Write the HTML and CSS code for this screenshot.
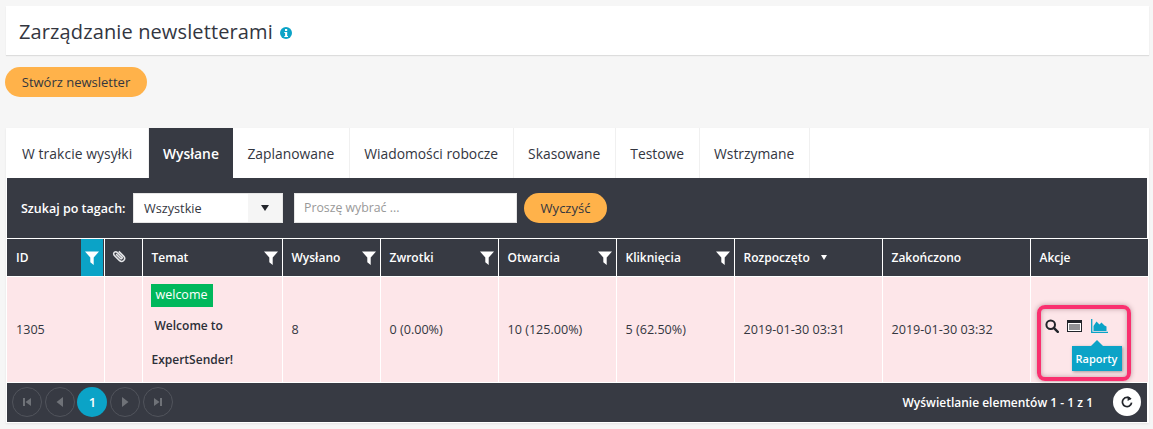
FILE: index.html
```html
<!DOCTYPE html>
<html lang="pl">
<head>
<meta charset="utf-8">
<title>Zarządzanie newsletterami</title>
<link rel="stylesheet" href="styles.css">
</head>
<body>
<svg class="defs" width="0" height="0" aria-hidden="true">
  <symbol id="funnel" viewBox="0 0 14 14"><path d="M0 0.5h14L8.7 6.6V14L5.3 11.3V6.6z" fill="currentColor"/></symbol>
</svg>
<header class="page-head">
  <h1>Zarządzanie newsletterami</h1>
  <svg class="info" viewBox="0 0 12 12" width="12" height="12"><circle cx="6" cy="6" r="6" fill="#0ba3c7"/><rect x="5" y="2" width="2.2" height="2" fill="#fff"/><path d="M4.3 5h2.9v3.9h.8V10H4.3V8.9h.8V6.1h-.8z" fill="#fff"/></svg>
</header>
<div class="actions"><button class="btn btn-create">Stwórz newsletter</button></div>
<main class="panel">
  <nav class="tabs">
    <a class="tab">W trakcie wysyłki</a>
    <a class="tab active">Wysłane</a>
    <a class="tab">Zaplanowane</a>
    <a class="tab">Wiadomości robocze</a>
    <a class="tab">Skasowane</a>
    <a class="tab">Testowe</a>
    <a class="tab">Wstrzymane</a>
  </nav>
  <div class="toolbar">
    <label class="tb-label">Szukaj po tagach:</label>
    <div class="select"><span class="select-val">Wszystkie</span><span class="select-arrow"><i></i></span></div>
    <div class="input">Proszę wybrać ...</div>
    <button class="btn btn-clear">Wyczyść</button>
  </div>
  <table class="grid">
    <colgroup>
      <col class="c-id"><col class="c-att"><col class="c-subj"><col class="c-sent"><col class="c-ret"><col class="c-open"><col class="c-click"><col class="c-start"><col class="c-end"><col class="c-act">
    </colgroup>
    <thead>
      <tr>
        <th><div class="th-in">ID<span class="flt flt-on"><svg width="14" height="14"><use href="#funnel"/></svg></span></div></th>
        <th><svg class="clip" viewBox="0 0 14 14" width="14" height="14"><path d="M11.6 6.8 6.9 11.6c-1.3 1.3-3.2 1.3-4.4.1s-1.2-3.1.1-4.4l5-5c.9-.9 2.2-.9 3 0s.8 2.1 0 2.9L5.9 9.9c-.4.4-1 .4-1.4 0s-.4-1 0-1.4l4.4-4.4" fill="none" stroke="#e4e5e8" stroke-width="1.5" transform="rotate(-90 7 7)"/></svg></th>
        <th><div class="th-in">Temat<span class="flt"><svg width="14" height="14"><use href="#funnel"/></svg></span></div></th>
        <th><div class="th-in">Wysłano<span class="flt"><svg width="14" height="14"><use href="#funnel"/></svg></span></div></th>
        <th><div class="th-in">Zwrotki<span class="flt"><svg width="14" height="14"><use href="#funnel"/></svg></span></div></th>
        <th><div class="th-in">Otwarcia<span class="flt"><svg width="14" height="14"><use href="#funnel"/></svg></span></div></th>
        <th><div class="th-in">Kliknięcia<span class="flt"><svg width="14" height="14"><use href="#funnel"/></svg></span></div></th>
        <th><div class="th-in">Rozpoczęto<span class="sort"></span></div></th>
        <th><div class="th-in">Zakończono</div></th>
        <th><div class="th-in">Akcje</div></th>
      </tr>
    </thead>
    <tbody>
      <tr>
        <td>1305</td>
        <td></td>
        <td class="subj">
          <span class="tag">welcome</span>
          <p class="subj-l1">Welcome to</p>
          <p class="subj-l2">ExpertSender!</p>
        </td>
        <td>8</td>
        <td>0 (0.00%)</td>
        <td>10 (125.00%)</td>
        <td>5 (62.50%)</td>
        <td>2019-01-30 03:31</td>
        <td>2019-01-30 03:32</td>
        <td class="acts">
          <div class="icons">
            <svg viewBox="0 0 14 14" width="14" height="14"><circle cx="5.7" cy="5.7" r="4.3" fill="none" stroke="#22252b" stroke-width="2"/><path d="M8.8 8.8l4 4" stroke="#22252b" stroke-width="2.4" stroke-linecap="round"/></svg>
            <svg viewBox="0 0 15 12" width="15" height="12"><rect x=".5" y=".5" width="14" height="11" fill="#fff" stroke="#22252b"/><rect width="15" height="3" fill="#22252b"/><path d="M2 5h11M2 7h11M2 9h11" stroke="#22252b"/></svg>
            <svg viewBox="0 0 17 14" width="17" height="14"><path d="M.7 0v13.3H17" fill="none" stroke="#0ba3c7" stroke-width="1.3"/><path d="M2.5 12V7l3-4.5 3 3 2-2 3 3 2 1V12z" fill="#0ba3c7"/></svg>
          </div>
          <div class="tip">Raporty</div>
          <div class="hl"></div>
        </td>
      </tr>
    </tbody>
  </table>
  <footer class="pager">
    <div class="pages">
      <span class="pg"><svg viewBox="0 0 10 10" width="10" height="10"><path d="M1 1h2v8H1zM9 1v8L3.5 5z"/></svg></span>
      <span class="pg"><svg viewBox="0 0 10 10" width="10" height="10"><path d="M8 0v10L1.5 5z"/></svg></span>
      <span class="pg pg-on">1</span>
      <span class="pg"><svg viewBox="0 0 10 10" width="10" height="10"><path d="M2 0v10L8.5 5z"/></svg></span>
      <span class="pg"><svg viewBox="0 0 10 10" width="10" height="10"><path d="M1 1v8L6.5 5zM7 1h2v8H7z"/></svg></span>
    </div>
    <div class="count">Wyświetlanie elementów 1 - 1 z 1</div>
    <span class="refresh"><svg viewBox="0 0 12 12" width="12" height="12"><path d="M9.7 3.2A4.6 4.6 0 1 0 10.6 6.6" fill="none" stroke="#22252b" stroke-width="1.7"/><path d="M6.6 0v5l3.9-2.2z" fill="#22252b"/></svg></span>
  </footer>
</main>
</body>
</html>
```
FILE: styles.css
```css
* { box-sizing: border-box; }
html, body { margin: 0; height: 429px; overflow: hidden; }
body {
  background: #f6f6f6;
  padding: 6px 4px 0 6px;
  font-family: "Open Sans", "Noto Sans", sans-serif;
  font-size: 12px;
  color: #33363f;
}
.defs { position: absolute; }
.page-head {
  height: 49px;
  background: #fff;
  box-shadow: 0 1px 1px rgba(0,0,0,.1);
  display: flex;
  align-items: center;
  gap: 7px;
  padding: 2px 0 0 13px;
}
h1 { margin: 0; font-size: 20px; font-weight: 400; letter-spacing: .12px; color: #33363f; }
.info { margin-top: 3px; }
.actions { margin: 12px 0 0 -1px; height: 61px; }
.btn {
  border: 0;
  background: #ffb24a;
  border-radius: 15px;
  font: 400 13px "Open Sans", sans-serif;
  color: #33363f;
  height: 30px;
  padding: 0;
}
.btn-create { width: 142px; }
.btn-clear { width: 83px; margin-left: 7px; }
.panel { background: #fff; box-shadow: 0 1px 2px rgba(0,0,0,.08); height: 295px; padding: 0 2px 0 1px; }
.tabs { display: flex; height: 50px; }
.tab {
  display: flex;
  align-items: center;
  padding: 0 14.5px;
  border-right: 1px solid #f0f0f0;
  font-size: 13.85px;
  color: #33363f;
}
.tab:first-child { width: 142px; padding: 0 0 0 15px; letter-spacing: .08px; }
.tab.active { background: #373a43; color: #fff; font-weight: 600; border-right: 0; padding: 0 14px; }
.toolbar {
  height: 60px;
  background: #373a43;
  display: flex;
  align-items: center;
  padding: 0 0 0 14px;
  color: #fff;
}
.tb-label { font-size: 12.5px; font-weight: 600; width: 112px; }
.select {
  width: 150px;
  height: 30px;
  background: #fff;
  border: 1px solid #e5e5e5;
  display: flex;
  font-size: 12.7px;
  color: #33363f;
}
.select-val { flex: 1; padding: 5px 0 0 10px; }
.select-arrow { width: 34px; background: #f5f5f5; display: flex; align-items: center; justify-content: center; }
.select-arrow i { border: 4px solid transparent; border-top: 6px solid #22252b; border-bottom: 0; border-left-width: 4px; }
.input {
  width: 223px;
  height: 30px;
  margin-left: 11px;
  background: #fff;
  border: 1px solid #e5e5e5;
  padding: 5px 0 0 9px;
  font-size: 12.3px;
  color: #999;
}
.grid {
  border-collapse: collapse;
  table-layout: fixed;
  width: 1141px;
}
.c-id { width: 97px; }
.c-att { width: 38px; }
.c-subj { width: 140px; }
.c-sent { width: 98px; }
.c-ret { width: 118px; }
.c-open { width: 118px; }
.c-click { width: 118px; }
.c-start { width: 148px; }
.c-end { width: 148px; }
.c-act { width: 118px; }
th {
  height: 38px;
  background: #373a43;
  color: #fff;
  text-align: left;
  font-size: 12px;
  font-weight: 600;
  padding: 0;
  border-left: 1px solid #fff;
  border-top: 1px solid #fff;
  border-bottom: 1px solid #fff;
}
th:first-child, td:first-child { border-left: 0; }
.th-in { height: 37px; display: flex; align-items: center; justify-content: space-between; padding-left: 9px; position: relative; }
.flt { width: 22px; height: 37px; display: flex; align-items: center; justify-content: center; color: #fff; padding-top: 1px; }
.flt-on { background: #0ba3c7; margin-right: 1px; }
.sort { position: absolute; left: 86px; top: 16px; border: 3.5px solid transparent; border-top: 5px solid #fff; border-bottom: 0; }
.clip { display: block; margin: -4px 0 0 7px; }
td {
  height: 105px;
  background: #fde6e9;
  padding: 0 0 0 9px;
  border-left: 1px solid #fff;
  font-size: 12.6px;
  color: #33363f;
  vertical-align: middle;
}
.subj { vertical-align: top; padding-top: 7px; }
.tag {
  display: block;
  width: 62px;
  height: 23px;
  margin-left: -1px;
  background: #00b85c;
  color: #fff;
  font-size: 12.5px;
  line-height: 22px;
  text-align: center;
}
.subj p { margin: 0; font-weight: 600; font-size: 12px; line-height: 17px; color: #2c2f38; }
.subj-l1 { padding: 10px 0 0 3px; }
.subj-l2 { padding-top: 17px; }
.acts { position: relative; }
.icons { display: flex; align-items: center; gap: 8.5px; margin: -6px 0 0 5px; }
.tip {
  position: absolute;
  left: 41px;
  top: 69px;
  width: 50px;
  height: 25px;
  background: #0ba3c7;
  color: #fff;
  font-size: 11px;
  font-weight: 600;
  text-align: center;
  line-height: 25px;
  box-shadow: 1px 1px 3px rgba(0,0,0,.35);
}
.tip::before {
  content: "";
  position: absolute;
  left: 19px;
  top: -6px;
  border: 6px solid transparent;
  border-bottom-color: #0ba3c7;
  border-top: 0;
}
.hl {
  position: absolute;
  left: 6px;
  top: 28px;
  width: 94px;
  height: 76px;
  border: 4px solid #f9306f;
  border-radius: 8px;
  box-shadow: 0 0 5px rgba(80,30,40,.4), inset 0 0 5px rgba(80,30,40,.35);
}
.pager {
  height: 39px;
  margin-top: 1px;
  background: #373a43;
  display: flex;
  align-items: center;
  padding: 0 6px 0 5px;
  color: #fff;
}
.pages { display: flex; gap: 2.7px; flex: 1; }
.pg {
  width: 30px;
  height: 30px;
  border-radius: 50%;
  border: 1px solid #51545c;
  display: flex;
  align-items: center;
  justify-content: center;
  fill: #6f7278;
}
.pg-on { background: #0ba3c7; border: 0; color: #fff; font-weight: 600; font-size: 13px; }
.count { font-size: 12px; font-weight: 600; margin-right: 20px; }
.refresh {
  width: 28px;
  height: 28px;
  border-radius: 50%;
  background: #fff;
  display: flex;
  align-items: center;
  justify-content: center;
}
```
